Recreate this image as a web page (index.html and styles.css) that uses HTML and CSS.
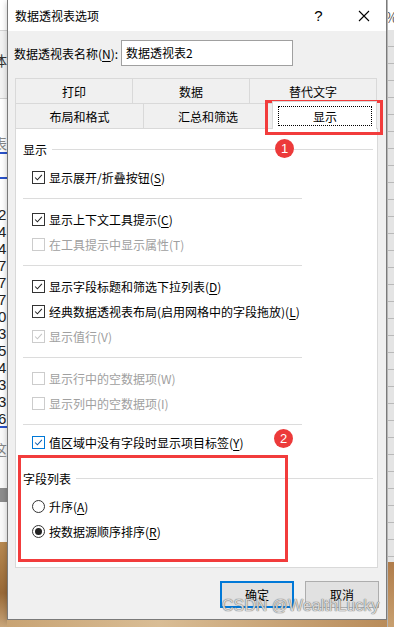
FILE: index.html
```html
<!DOCTYPE html>
<html lang="zh-CN">
<head>
    <meta charset="UTF-8">
    <meta name="viewport" content="width=device-width, initial-scale=1.0">
    <title>数据透视表选项</title>
    <link rel="stylesheet" href="styles.css">
</head>
<body>
    <div class="screen">
        <div class="side side-left">
            <div class="sheet-top"></div>
            <div class="sheet-ribbon"><span class="cut-text">体</span></div>
            <div class="sheet-head"><span class="cut-text faint">表</span></div>
            <div class="sheet-cells">
                <div class="cell">2</div><div class="cell">4</div><div class="cell">4</div>
                <div class="cell">7</div><div class="cell">7</div><div class="cell">7</div>
                <div class="cell">0</div><div class="cell">3</div><div class="cell">5</div>
                <div class="cell">4</div><div class="cell">3</div><div class="cell">3</div>
                <div class="cell">6</div>
            </div>
            <div class="sheet-low"><span class="cut-text faint">这</span></div>
            <div class="photo"></div>
        </div>

        <div class="middle">
            <div class="dialog">
                <div class="titlebar">
                    <span class="title">数据透视表选项</span>
                    <div class="title-btns">
                        <span class="tb-btn">?</span>
                        <span class="tb-btn">
                            <svg width="12" height="12" viewBox="0 0 12 12"><path d="M1 1 L11 11 M11 1 L1 11" stroke="#000" stroke-width="1.1" fill="none"/></svg>
                        </span>
                    </div>
                </div>

                <div class="body">
                    <div class="name-row">
                        <span class="name-label">数据透视表名称(<u>N</u>):</span>
                        <div class="name-input">数据透视表2</div>
                    </div>

                    <div class="tabs">
                        <div class="tab-row">
                            <div class="tab w117">打印</div>
                            <div class="tab w117">数据</div>
                            <div class="tab w128 last">替代文字</div>
                        </div>
                        <div class="tab-row">
                            <div class="tab w128">布局和格式</div>
                            <div class="tab w129">汇总和筛选</div>
                            <div class="tab w105 last active"><span class="focus">显示</span></div>
                        </div>
                    </div>

                    <div class="panel">
                        <div class="group-head"><span>显示</span><i class="rule"></i></div>

                        <div class="opt first">
                            <span class="cb on"><svg viewBox="0 0 13 13"><path d="M2.5 6.5 L5.2 9.2 L10.5 3.5" /></svg></span>
                            <span>显示展开/折叠按钮(<u>S</u>)</span>
                        </div>
                        <div class="sep"></div>

                        <div class="opt">
                            <span class="cb on"><svg viewBox="0 0 13 13"><path d="M2.5 6.5 L5.2 9.2 L10.5 3.5" /></svg></span>
                            <span>显示上下文工具提示(<u>C</u>)</span>
                        </div>
                        <div class="opt off">
                            <span class="cb"></span>
                            <span>在工具提示中显示属性(T)</span>
                        </div>
                        <div class="sep"></div>

                        <div class="opt">
                            <span class="cb on"><svg viewBox="0 0 13 13"><path d="M2.5 6.5 L5.2 9.2 L10.5 3.5" /></svg></span>
                            <span>显示字段标题和筛选下拉列表(<u>D</u>)</span>
                        </div>
                        <div class="opt">
                            <span class="cb on"><svg viewBox="0 0 13 13"><path d="M2.5 6.5 L5.2 9.2 L10.5 3.5" /></svg></span>
                            <span>经典数据透视表布局(启用网格中的字段拖放)(<u>L</u>)</span>
                        </div>
                        <div class="opt off">
                            <span class="cb on"><svg viewBox="0 0 13 13"><path d="M2.5 6.5 L5.2 9.2 L10.5 3.5" /></svg></span>
                            <span>显示值行(V)</span>
                        </div>
                        <div class="sep"></div>

                        <div class="opt off">
                            <span class="cb"></span>
                            <span>显示行中的空数据项(W)</span>
                        </div>
                        <div class="opt off">
                            <span class="cb"></span>
                            <span>显示列中的空数据项(I)</span>
                        </div>
                        <div class="sep short"></div>

                        <div class="opt hot">
                            <span class="cb on"><svg viewBox="0 0 13 13"><path d="M2.5 6.5 L5.2 9.2 L10.5 3.5" /></svg></span>
                            <span>值区域中没有字段时显示项目标签(<u>Y</u>)</span>
                        </div>

                        <div class="group-head second"><span>字段列表</span><i class="rule"></i></div>

                        <div class="opt first">
                            <span class="rb"></span>
                            <span>升序(<u>A</u>)</span>
                        </div>
                        <div class="opt">
                            <span class="rb sel"><b></b></span>
                            <span>按数据源顺序排序(<u>R</u>)</span>
                        </div>
                    </div>

                    <div class="buttons">
                        <div class="btn primary">确定</div>
                        <div class="btn">取消</div>
                    </div>
                </div>
            </div>
            <div class="photo-strip"></div>
        </div>

        <div class="side side-right">
            <div class="sheet-corner"><span class="cut-text">%</span></div>
            <div class="row-heads"></div>
            <div class="photo"></div>
        </div>

        <!-- annotations drawn on top of the screenshot -->
        <div class="mark mark-tab"></div>
        <div class="mark mark-list"></div>
        <div class="badge badge-1">1</div>
        <div class="badge badge-2">2</div>
        <div class="watermark">CSDN @WealthLucky</div>
    </div>
</body>
</html>
```

FILE: styles.css
```css
* { margin: 0; padding: 0; box-sizing: border-box; }
body { background: #fff; }
u { text-decoration: underline; text-underline-offset: 2px; }

.screen { position: relative; display: flex; width: 394px; height: 627px; overflow: hidden; background: #c29a6a; font-family: "Noto Sans CJK SC", "Microsoft YaHei", sans-serif; font-size: 12px; color: #000; }

/* background spreadsheet bits at the edges */
.side { width: 7px; display: flex; flex-direction: column; overflow: hidden; }
.cut-text { display: block; font-size: 14px; line-height: 18px; color: #333; white-space: nowrap; }
.cut-text.faint { color: #888; }
.side-left .cut-text { margin-left: -7px; }
.sheet-top { height: 31px; background: #fff; border-bottom: 1px solid #d4d4d4; }
.sheet-ribbon { height: 68px; background: #f3f3f3; border-bottom: 1px solid #d0d0d0; padding-top: 20px; }
.sheet-head { height: 80px; background: #fff; padding-top: 35px; border-bottom: 2px solid #2a52c9; box-shadow: inset 0 -23px 0 #fff, inset 0 -25px 0 #2a52c9; }
.sheet-cells { height: 249px; background: #fff; border-bottom: 2px solid #2a52c9; padding-top: 27px; }
.cell { height: 17px; line-height: 17px; font-family: "Liberation Sans", Arial, sans-serif; font-size: 15px; color: #222; margin-left: -2px; }
.sheet-low { flex: 1; background: #fafafa; padding-top: 12px; box-shadow: inset 0 -40px 0 #fafafa, inset 0 -54px 0 #8d8d8d; }
.side-left .photo { height: 85px; background: linear-gradient(180deg, #b88a52, #9a6a38 60%, #c9a67a); }

.side-right { border-left: 1px solid #b5b5b5; }
.sheet-corner { height: 30px; background: #fff; padding-top: 8px; }
.sheet-corner .cut-text { margin-left: -3px; color: #555; }
.row-heads { flex: 1; background: repeating-linear-gradient(180deg, #e4e4e4 0 16px, #b9b9b9 16px 17px); }
.side-right .photo { height: 65px; background: linear-gradient(180deg, #b07c4a, #c8a070); }

/* the dialog */
.middle { width: 380px; display: flex; flex-direction: column; }
.dialog { height: 620px; background: #f0f0f0; border: 1px solid #7a7a7a; border-top: none; display: flex; flex-direction: column; box-shadow: 0 2px 6px rgba(0,0,0,0.25); }
.photo-strip { flex: 1; background: linear-gradient(90deg, #c8a373, #d9bd95 40%, #b98c5a); }

.titlebar { height: 31px; background: #fff; display: flex; align-items: center; justify-content: space-between; padding-left: 7px; }
.title { font-size: 12px; }
.title-btns { display: flex; height: 31px; }
.tb-btn { width: 45px; display: flex; align-items: center; justify-content: center; font-family: "Liberation Sans", Arial, sans-serif; font-size: 15px; }

.body { flex: 1; padding: 0 8px 0 7px; display: flex; flex-direction: column; }

.name-row { display: flex; align-items: center; height: 26px; margin-top: 9px; }
.name-label { width: 107px; margin-left: -1px; }
.name-input { width: 172px; height: 26px; background: #fff; border: 1px solid #a0a0a0; padding-left: 4px; line-height: 24px; }

.tabs { margin-top: 12px; }
.tab-row { display: flex; height: 25px; }
.tab { height: 25px; display: flex; align-items: center; justify-content: center; background: #f0f0f0; border-top: 1px solid #d9d9d9; border-left: 1px solid #d9d9d9; }
.tab.last { border-right: 1px solid #d9d9d9; }
.w117 { width: 117px; }
.w128 { width: 128px; }
.w129 { width: 129px; }
.w105 { width: 105px; }
.tab.active { background: #fff; height: 28px; margin-top: -2px; position: relative; z-index: 1; padding: 4px 4px 3px 5px; }
.focus { flex: 1; align-self: stretch; display: flex; align-items: center; justify-content: center; border: 1px dotted #000; }

.panel { height: 440px; background: #fff; border: 1px solid #d9d9d9; padding: 10px 4px 0 7px; }
.group-head { display: flex; align-items: center; height: 20px; }
.group-head .rule { flex: 1; height: 1px; background: #dcdcdc; margin-left: 5px; }
.group-head.second { margin-top: 13px; }

.opt { display: flex; align-items: center; height: 25px; padding-left: 9px; gap: 4px; white-space: nowrap; }
.opt.first { margin-top: 6px; }
.opt.off { color: #a0a0a0; }

.cb { width: 13px; height: 13px; border: 1px solid #333; background: #fff; display: inline-block; }
.cb svg { display: block; width: 11px; height: 11px; fill: none; stroke: #222; stroke-width: 1.2; }
.opt.off .cb { border-color: #cccccc; }
.opt.off .cb svg { stroke: #c4c4c4; }
.opt.hot .cb { border-color: #0078d7; }
.opt.hot .cb svg { stroke: #0b5cad; }

.rb { width: 13px; height: 13px; border: 1px solid #333; border-radius: 50%; background: #fff; display: inline-flex; align-items: center; justify-content: center; }
.rb b { width: 7px; height: 7px; border-radius: 50%; background: #222; }

.sep { width: 279px; height: 1px; background: #dcdcdc; margin: 8px 0; }
.sep.short { margin-bottom: 5px; }

.buttons { display: flex; justify-content: flex-end; gap: 11px; margin-top: 13px; margin-right: -1px; }
.btn { width: 74px; height: 27px; display: flex; align-items: center; justify-content: center; background: #e1e1e1; border: 1px solid #adadad; }
.btn.primary { border: 2px solid #0078d7; }

/* annotations */
.mark { position: absolute; border: 3px solid #f23c3c; }
.mark-tab { left: 265px; top: 100px; width: 118px; height: 35px; }
.mark-list { left: 18px; top: 455px; width: 270px; height: 107px; }
.badge { position: absolute; width: 19px; height: 19px; border-radius: 50%; background: #ec3a3a; color: #fff; font-family: "Liberation Sans", Arial, sans-serif; font-size: 13px; line-height: 19px; text-align: center; }
.badge-1 { left: 275px; top: 139px; }
.badge-2 { left: 274px; top: 429px; }
.watermark { position: absolute; left: 222px; top: 597px; font-family: "Liberation Sans", Arial, sans-serif; font-size: 16px; color: rgba(235,235,235,0.85); text-shadow: 0 0 1px #6a6a6a, 0 0 1px #6a6a6a; white-space: nowrap; }
```
